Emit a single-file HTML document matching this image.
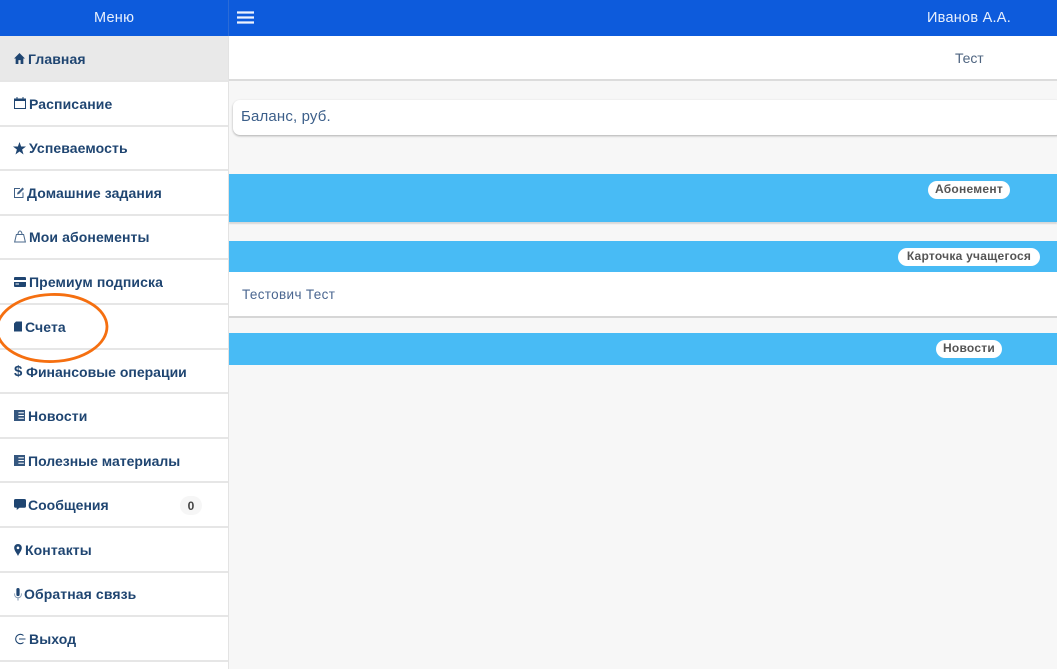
<!DOCTYPE html>
<html lang="ru"><head><meta charset="utf-8"><title>Меню</title>
<style>
html,body{margin:0;padding:0}
body{width:1057px;height:669px;overflow:hidden;background:#f7f7f7;font-family:"Liberation Sans",sans-serif}
#w{position:relative;width:1057px;height:669px;overflow:hidden;filter:blur(.35px)}
.a{position:absolute}
.t{position:absolute;white-space:nowrap;line-height:18px}
#side{left:0;top:36px;width:228px;height:633px;background:#fff;border-right:1px solid #e3e3e3}
.sep{position:absolute;left:0;width:228px;height:2px;background:#e6e6e6}
.m{position:absolute;white-space:nowrap;font-weight:bold;font-size:14px;line-height:18px;color:#1f4571;letter-spacing:.1px}
svg.i{position:absolute;fill:#1f4571}
.pill{position:absolute;background:#fff;border-radius:9px;height:18px;line-height:17px;text-align:center;font-weight:bold;font-size:12px;color:#555;letter-spacing:.25px;white-space:nowrap}
.blue{position:absolute;left:229px;width:828px;background:#48bbf5}
</style></head><body><div id="w">
<div class="a" style="left:0;top:0;width:1057px;height:36px;background:#0d5bdc"></div>
<div class="a" style="left:228px;top:0;width:1px;height:36px;background:#2a6bd8"></div>
<div class="t" style="left:94px;top:9px;font-size:14.5px;color:#e8f0fd;letter-spacing:.25px">Меню</div>
<svg class="a" style="left:237px;top:11px" width="18" height="14"><path d="M0 1.500H17M0 6.500H17M0 11.500H17" stroke="#eef3fd" stroke-width="2.200" fill="none"/></svg>
<div class="t" style="left:927px;top:9px;font-size:14.500px;color:#e8f0fd;letter-spacing:.25px">Иванов А.А.</div>

<div class="a" id="side"></div>
<div class="a" style="left:0;top:36px;width:228px;height:45px;background:#e9e9e9"></div>
<div class="sep" style="top:80px"></div><div class="sep" style="top:125px"></div><div class="sep" style="top:169px"></div><div class="sep" style="top:214px"></div><div class="sep" style="top:258px"></div><div class="sep" style="top:303px"></div><div class="sep" style="top:348px"></div><div class="sep" style="top:392px"></div><div class="sep" style="top:437px"></div><div class="sep" style="top:481px"></div><div class="sep" style="top:526px"></div><div class="sep" style="top:571px"></div><div class="sep" style="top:615px"></div><div class="sep" style="top:660px"></div>

<svg class="i" style="left:13.500px;top:53px" width="11" height="11" viewBox="0 0 10 10"><path d="M5 0L10 5H8.500V10H6V6.500H4V10H1.500V5H0Z"/></svg>
<div class="m" style="left:28px;top:50px">Главная</div>
<svg class="i" style="left:14px;top:97px" width="12" height="12" viewBox="0 0 12 12"><path d="M0 1.500H2.500V0H3.500V1.500H8.500V0H9.500V1.500H12V12H0ZM1 4V11H11V4Z"/></svg>
<div class="m" style="left:29px;top:95px">Расписание</div>
<svg class="i" style="left:13px;top:141.500px" width="13" height="13" viewBox="0 0 12 12"><path d="M6 0L7.500 4.200H12L8.400 6.900L9.700 11.500L6 8.800L2.300 11.500L3.600 6.900L0 4.200H4.500Z"/></svg>
<div class="m" style="left:29px;top:139px">Успеваемость</div>
<svg class="i" style="left:14px;top:187px;opacity:.85" width="10" height="11" viewBox="0 0 10 11"><path d="M0 1H6V2H1V10H8.500V5.500H9.500V11H0ZM8.500 .5L10 2L5 7L3 7.500L3.500 5.500Z"/></svg>
<div class="m" style="left:27px;top:184px">Домашние задания</div>
<svg class="i" style="left:14px;top:230px;opacity:.8" width="12" height="13" viewBox="0 0 12 12"><path d="M2 3.500H3.500C3.700 1.500 4.700 0 6 0S8.300 1.500 8.500 3.500H10L12 12H0ZM4.500 3.500H7.500C7.300 2 6.800 1 6 1S4.700 2 4.500 3.500ZM2.800 4.500L1.300 11H10.700L9.200 4.500Z" fill-rule="evenodd"/></svg>
<div class="m" style="left:29px;top:228px">Мои абонементы</div>
<svg class="i" style="left:14px;top:277px" width="12" height="10" viewBox="0 0 12 10"><path d="M1 0H11Q12 0 12 1V9Q12 10 11 10H1Q0 10 0 9V1Q0 0 1 0ZM0 3V5H12V3ZM1.500 6.500V7.500H5V6.500Z" fill-rule="evenodd"/></svg>
<div class="m" style="left:29px;top:273px">Премиум подписка</div>
<svg class="i" style="left:14px;top:321px" width="8" height="11" viewBox="0 0 8 10"><path d="M2 0H8V10H0V2Z"/></svg>
<div class="m" style="left:25px;top:317.500px">Счета</div>
<div class="m" style="left:14px;top:363px;font-size:15px">$</div>
<div class="m" style="left:26px;top:362.500px;letter-spacing:0">Финансовые операции</div>
<svg class="i" style="left:13.500px;top:410px" width="11" height="11" viewBox="0 0 10 10"><path d="M0 0H10V10H0ZM4 2V3H9V2ZM4 4.500V5.500H9V4.500ZM4 7V8H9V7Z" fill-rule="evenodd" opacity=".9"/></svg>
<div class="m" style="left:28px;top:407px">Новости</div>
<svg class="i" style="left:13.500px;top:455px" width="11" height="11" viewBox="0 0 10 10"><path d="M0 0H10V10H0ZM4 2V3H9V2ZM4 4.500V5.500H9V4.500ZM4 7V8H9V7Z" fill-rule="evenodd" opacity=".9"/></svg>
<div class="m" style="left:28px;top:452px;letter-spacing:0">Полезные материалы</div>
<svg class="i" style="left:13.500px;top:499px" width="12" height="11" viewBox="0 0 11 10"><path d="M1.500 0H9.500Q11 0 11 1.500V6.500Q11 8 9.500 8H5L2.500 10V8H1.500Q0 8 0 6.500V1.500Q0 0 1.500 0Z"/></svg>
<div class="m" style="left:28px;top:496px;letter-spacing:0">Сообщения</div>
<div class="a" style="left:180px;top:496px;width:22px;height:19px;border-radius:10px;background:#f6f6f6"></div>
<div class="t" style="left:180px;top:497px;width:22px;text-align:center;font-size:12px;font-weight:bold;color:#444">0</div>
<svg class="i" style="left:13.500px;top:544px" width="8" height="12" viewBox="0 0 7 11"><path d="M3.500 0C5.500 0 7 1.500 7 3.500C7 6 4.500 8.500 3.500 11C2.500 8.500 0 6 0 3.500C0 1.500 1.500 0 3.500 0ZM3.500 2.300A1.200 1.200 0 1 0 3.500 4.700A1.200 1.200 0 1 0 3.500 2.300Z" fill-rule="evenodd"/></svg>
<div class="m" style="left:25px;top:541px">Контакты</div>
<svg class="i" style="left:13.500px;top:588px" width="8" height="13" viewBox="0 0 7 12"><rect x="2" y="0" width="3" height="7.500" rx="1.500"/><path d="M0 5H.8V6C.8 7.500 2 8.500 3.500 8.500S6.200 7.500 6.200 6V5H7V6C7 8 5.500 9.200 4 9.400V11.500H3V9.400C1.500 9.200 0 8 0 6Z" opacity=".55"/></svg>
<div class="m" style="left:24px;top:585px">Обратная связь</div>
<svg class="a" style="left:14px;top:633px" width="12" height="12" viewBox="0 0 12 12" fill="none" stroke="#1f4571" stroke-width="1.100"><path d="M9.500 2.500A4.700 4.700 0 1 0 9.500 9.500M5 6H11.500"/></svg>
<div class="m" style="left:29px;top:630px">Выход</div>

<svg class="a" style="left:0;top:290px" width="115" height="76" fill="none"><ellipse cx="52" cy="38" rx="55" ry="33.500" transform="rotate(-2 52 38)" stroke="#f56f10" stroke-width="2.800"/></svg>

<div class="a" style="left:229px;top:36px;width:828px;height:43px;background:#fff;border-bottom:2px solid #dcdcdc"></div>
<div class="t" style="left:955px;top:48.500px;font-size:14px;color:#4e6480;letter-spacing:-.1px">Тест</div>
<div class="a" style="left:233px;top:100px;width:830px;height:35px;background:#fff;border-radius:7px;box-shadow:0 1px 2px rgba(0,0,0,.3)"></div>
<div class="t" style="left:241px;top:108px;font-size:15px;color:#3c5f8a;letter-spacing:.15px">Баланс, руб.</div>

<div class="blue" style="top:174px;height:48px;box-shadow:0 2px 1px #d8d8d8"></div>
<div class="pill" style="left:928px;top:181px;width:82px">Абонемент</div>
<div class="blue" style="top:241px;height:31px"></div>
<div class="pill" style="left:898px;top:248px;width:142px">Карточка учащегося</div>
<div class="a" style="left:229px;top:272px;width:828px;height:44px;background:#fff;border-bottom:2px solid #d6d6d6"></div>
<div class="t" style="left:242px;top:286px;font-size:13.500px;color:#4a6690;letter-spacing:.35px">Тестович Тест</div>
<div class="blue" style="top:333px;height:32px"></div>
<div class="pill" style="left:936px;top:340px;width:66px">Новости</div>
</div></body></html>
